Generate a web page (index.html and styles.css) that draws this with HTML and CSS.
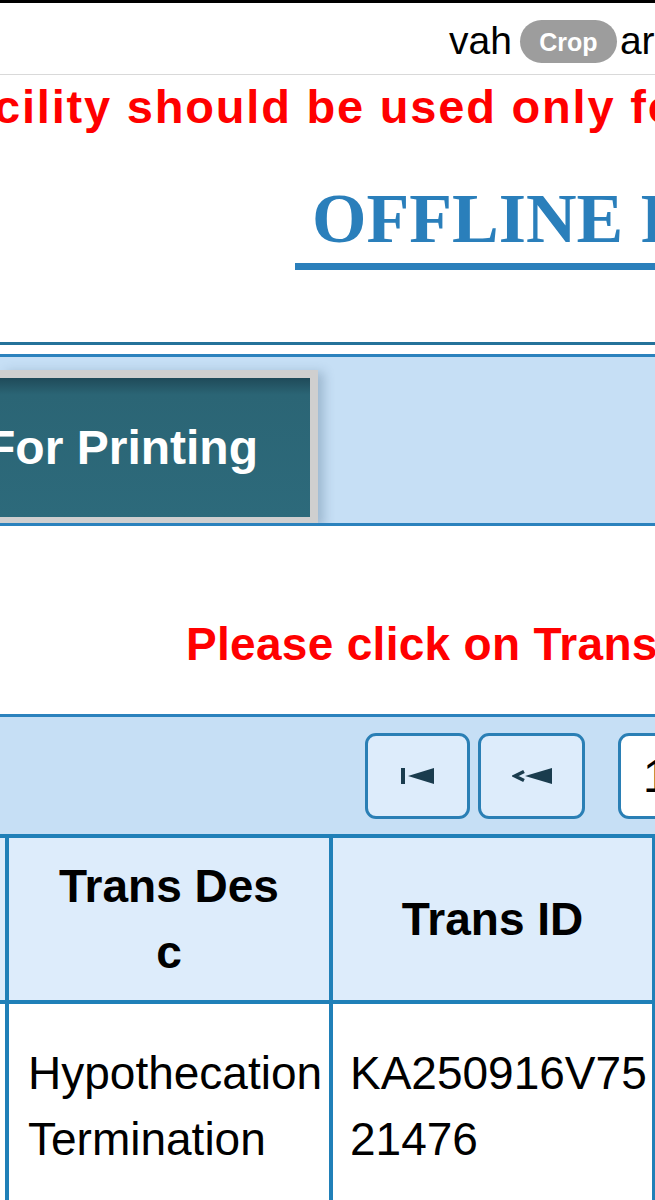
FILE: index.html
```html
<!DOCTYPE html>
<html lang="en">
  <head>
    <meta charset="UTF-8" />
    <meta name="viewport" content="width=device-width, initial-scale=1.0" />
    <title>Offline RC Print</title>
    <link rel="stylesheet" href="styles.css">
  </head>
  <body>
    <div class="urlbar">
      <span class="url">vah</span>
      <span class="crop">Crop</span>
      <span class="url url-tail">arivahan.gov.in</span>
    </div>

    <p class="notice">This facility should be used only for offline printing of documents</p>

    <div class="title-wrap">
      <h1 class="title">OFFLINE RC PRINT</h1>
    </div>

    <div class="rule"></div>
    <div class="action-panel">
      <button class="print-btn" type="button"><span>Proceed For Printing</span></button>
    </div>

    <p class="hint">Please click on Trans ID to print the document</p>

    <div class="grid-panel">
      <div class="pager">
        <button class="pg-btn" type="button" title="First">
          <svg width="33" height="16" viewBox="0 0 33 16">
            <rect x="0" y="0" width="4" height="16" />
            <polygon points="7,8 33,0 33,16" />
          </svg>
        </button>
        <button class="pg-btn" type="button" title="Previous">
          <svg width="40" height="16" viewBox="0 0 40 16">
            <polyline points="12,3.5 3,8 12,12.5" fill="none" />
            <polygon points="13,8 40,0 40,16" />
          </svg>
        </button>
        <div class="pg-input">1</div>
      </div>

      <table class="trans-table">
        <colgroup>
          <col class="c-no" />
          <col class="c-desc" />
          <col class="c-id" />
          <col class="c-regn" />
        </colgroup>
        <thead>
          <tr>
            <th class="cell-no">No</th>
            <th class="th-desc">Trans Desc</th>
            <th>Trans ID</th>
            <th>Regn No</th>
          </tr>
        </thead>
        <tbody>
          <tr>
            <td class="cell-no">1</td>
            <td class="td-desc">Hypothecation Termination</td>
            <td class="td-id">KA250916V7521476</td>
            <td>KA01AB1234</td>
          </tr>
        </tbody>
      </table>
    </div>
  </body>
</html>
```

FILE: styles.css
```css
body {
  margin: 0;
  width: 655px;
  overflow: hidden;
  background: #fff;
  color: #000;
  font-family: "Liberation Sans", Arial, sans-serif;
}

/* browser address bar */
.urlbar {
  display: flex;
  align-items: flex-start;
  height: 57px;
  padding: 14px 0 0 449px;
  border-top: 3px solid #000;
  border-bottom: 1px solid #d9d9d9;
  white-space: nowrap;
  overflow: hidden;
}

.url {
  font-size: 39px;
  line-height: 48px;
}

.crop {
  margin: 3px 0 0 8px;
  width: 97px;
  height: 43px;
  border-radius: 22px;
  background: #9d9d9d;
  color: #fff;
  font-weight: bold;
  font-size: 25px;
  line-height: 44px;
  text-align: center;
  flex-shrink: 0;
}

.url-tail {
  margin-left: 3px;
}

.notice {
  margin: 4px 0 0 -170px;
  color: #ff0000;
  font-weight: bold;
  font-size: 47px;
  letter-spacing: 1.8px;
  line-height: 55px;
  white-space: nowrap;
}

.title-wrap {
  display: flex;
  margin-top: 45px;
}

.title {
  margin: 0 0 0 295px;
  padding: 0 0 4px 17px;
  border-bottom: 7px solid #2a7fbb;
  color: #2a7fbb;
  font-family: "Liberation Serif", "Times New Roman", serif;
  font-weight: bold;
  font-size: 70px;
  line-height: 80px;
  white-space: nowrap;
  flex-shrink: 0;
}

.rule {
  margin-top: 72px;
  height: 9px;
  border-top: 3px solid #24729a;
}

.action-panel {
  height: 153px;
  padding-top: 13px;
  background: #c6dff5;
  border-top: 3px solid #2b82bd;
  border-bottom: 3px solid #2b82bd;
  overflow: hidden;
}

.print-btn {
  display: flex;
  justify-content: flex-end;
  align-items: center;
  box-sizing: border-box;
  width: 318px;
  height: 155px;
  margin: 0;
  padding: 0 52px 0 0;
  border: 8px solid #cfcfcf;
  border-left: 0;
  background: linear-gradient(to bottom, #1f4a59, #2b6575 12%, #2d6a7b);
  box-shadow: 6px 2px 10px rgba(40, 70, 100, 0.25);
  color: #fff;
  font-family: "Liberation Sans", Arial, sans-serif;
  font-weight: bold;
  font-size: 48px;
  overflow: hidden;
}

.print-btn span {
  white-space: nowrap;
  flex-shrink: 0;
}

.hint {
  margin: 91px 0 0 186px;
  color: #ff0000;
  font-weight: bold;
  font-size: 46px;
  letter-spacing: 0.3px;
  line-height: 55px;
  white-space: nowrap;
}

.grid-panel {
  margin-top: 42px;
  border-top: 3px solid #2b82bd;
  background: #c6dff5;
}

.pager {
  display: flex;
  gap: 8px;
  padding: 16px 0 15px 365px;
  white-space: nowrap;
}

.pg-btn {
  display: flex;
  align-items: center;
  justify-content: center;
  box-sizing: border-box;
  width: 105px;
  height: 86px;
  margin: 0;
  padding: 0;
  border: 3px solid #2a7fb5;
  border-radius: 11px;
  background: #ddecfb;
  flex-shrink: 0;
}

.pg-btn + .pg-btn {
  width: 107px;
}

.pg-btn svg {
  fill: #1a3c4e;
  stroke: #1a3c4e;
  stroke-width: 0;
}

.pg-btn polyline {
  stroke-width: 3.5;
}

.pg-input {
  box-sizing: border-box;
  width: 100px;
  height: 86px;
  margin-left: 25px;
  padding-left: 22px;
  border: 3px solid #2a7fb5;
  border-radius: 11px;
  background: #fff;
  font-size: 46px;
  line-height: 80px;
  flex-shrink: 0;
}

.trans-table {
  margin-left: -100px;
  width: 1079px;
  table-layout: fixed;
  border-collapse: separate;
  border-spacing: 0;
  background: #fff;
  font-size: 46px;
  line-height: 66px;
}

.c-no {
  width: 109px;
}

.c-desc {
  width: 324px;
}

.c-id,
.c-regn {
  width: 323px;
}

.trans-table th,
.trans-table td {
  box-sizing: border-box;
  border-right: 4px solid #2080b8;
  border-bottom: 4px solid #2080b8;
}

.trans-table th {
  padding: 15px 42px;
  border-top: 4px solid #2080b8;
  background: #ddecfb;
  font-weight: bold;
  text-align: center;
}

.th-desc {
  word-break: break-all;
}

.trans-table td {
  padding: 36px 4px 36px 19px;
  text-align: left;
}

.trans-table .cell-no {
  padding-left: 4px;
  padding-right: 4px;
  text-align: left;
}

.trans-table .td-id {
  padding: 36px 2px 36px 17px;
  word-break: break-all;
}
```
